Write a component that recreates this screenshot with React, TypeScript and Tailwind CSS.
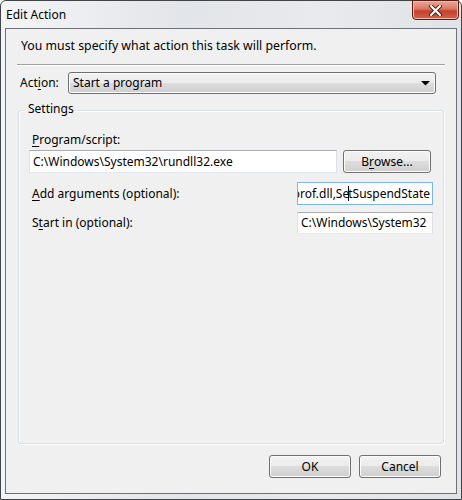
export default function App() {
  const font = "font-['Segoe_UI','Noto_Sans','Open_Sans',sans-serif]";
  const btn =
    "flex items-center rounded-[3px] border border-[#707070] bg-[linear-gradient(#f2f2f2_0%,#ebebeb_49%,#dddddd_50%,#cfcfcf_100%)] shadow-[inset_0_0_0_1px_#fcfcfc] text-[#000]";
  const input = "h-[22px] border border-[#abadb3] border-l-[#e2e3ea] border-r-[#dbdfe6] border-b-[#e3e9ef] bg-white flex items-center px-[3px] whitespace-nowrap overflow-hidden";

  return (
    <div className={`w-[462px] h-[500px] border border-[#404448] rounded-t-[6px] bg-[linear-gradient(90deg,#f3f4f6,#e2e5e9_40%,#e8eaed_70%,#e0e3e7)] flex flex-col text-[12px] leading-[16px] text-black ${font}`}>
      <div className="h-[27px] relative flex items-start">
        <span className="ml-[5px] mt-[6px] text-[12px] leading-[16px] text-black">Edit Action</span>
        <div className="absolute right-[2px] top-[-1px] w-[47px] h-[20px] rounded-b-[4px] border border-[#5a1e14] bg-[linear-gradient(#e9a99a_0%,#d9775f_45%,#c3412a_55%,#d2644a_100%)] flex items-center justify-center shadow-[inset_0_0_0_1px_#f0b8a8]">
          <svg width="13" height="11" viewBox="0 0 13 11">
            <path d="M2 1 L11 10 M11 1 L2 10" stroke="#4a1a12" strokeWidth="4" strokeLinecap="round" />
            <path d="M2 1 L11 10 M11 1 L2 10" stroke="#ffffff" strokeWidth="2.2" strokeLinecap="round" />
          </svg>
        </div>
      </div>
      <div className="mx-[4px] mb-[5px] flex-1 border border-[#6d7278] bg-[#f0f0f0] flex flex-col">
        <div className="pt-[9px] pl-[15px] text-[12.3px]">You must specify what action this task will perform.</div>
        <div className="mt-[10px] mx-[11px] border-t border-t-[#a0a0a0] border-b border-b-white" />
        <div className="mt-[6px] flex items-center">
          <span className="pl-[14px] w-[62px]">
            Act<u className="underline-offset-2">i</u>on:
          </span>
          <div className={`${btn} w-[368px] h-[22px] justify-between px-[4px]`}>
            <span>Start a program</span>
            <svg width="9" height="6" viewBox="0 0 9 6" className="mr-[1px]">
              <path d="M0 1 L9 1 L4.5 5.5 Z" fill="#000" />
            </svg>
          </div>
        </div>
        <div className="relative mt-[16px] ml-[12px] w-[426px] h-[334px] border border-[#d5dfe5] rounded-[3px] shadow-[inset_1px_1px_0_#ffffff,1px_1px_0_#ffffff] flex flex-col px-[10px]">
          <span className="absolute left-[6px] top-[-10px] px-[3px] bg-[#f0f0f0]">Settings</span>
          <span className="mt-[21px] ml-[3px]">
            <u className="underline-offset-2">P</u>rogram/script:
          </span>
          <div className="mt-[2px] flex items-center">
            <div className={`${input} w-[308px] h-[23px]`}>{"C:\\Windows\\System32\\rundll32.exe"}</div>
            <div className={`${btn} justify-center ml-[6px] w-[88px] h-[23px]`}>
              B<u className="underline-offset-2">r</u>owse...
            </div>
          </div>
          <div className="mt-[9px] flex items-center justify-between">
            <span className="ml-[3px]">
              <u className="underline-offset-2">A</u>dd arguments (optional):
            </span>
            <div className="w-[136px] h-[23px] border border-[#7eb4ea] bg-white flex items-center justify-end pr-[2px] whitespace-nowrap overflow-hidden">
              <span className="shrink-0">powrprof.dll,Se</span>
              <span className="shrink-0 w-px h-[15px] bg-black -mx-px" />
              <span className="shrink-0">tSuspendState</span>
            </div>
          </div>
          <div className="mt-[7px] flex items-center justify-between">
            <span className="ml-[3px]">
              S<u className="underline-offset-2">t</u>art in (optional):
            </span>
            <div className={`${input} w-[136px]`}>{"C:\\Windows\\System32"}</div>
          </div>
        </div>
        <div className="mt-[11px] mr-[15px] flex justify-end gap-[8px]">
          <div className={`${btn} justify-center w-[82px] h-[23px] border-[#3c7fb1] shadow-[inset_0_0_0_1px_#c4e5f6]`}>OK</div>
          <div className={`${btn} justify-center w-[82px] h-[23px]`}>Cancel</div>
        </div>
      </div>
    </div>
  );
}
